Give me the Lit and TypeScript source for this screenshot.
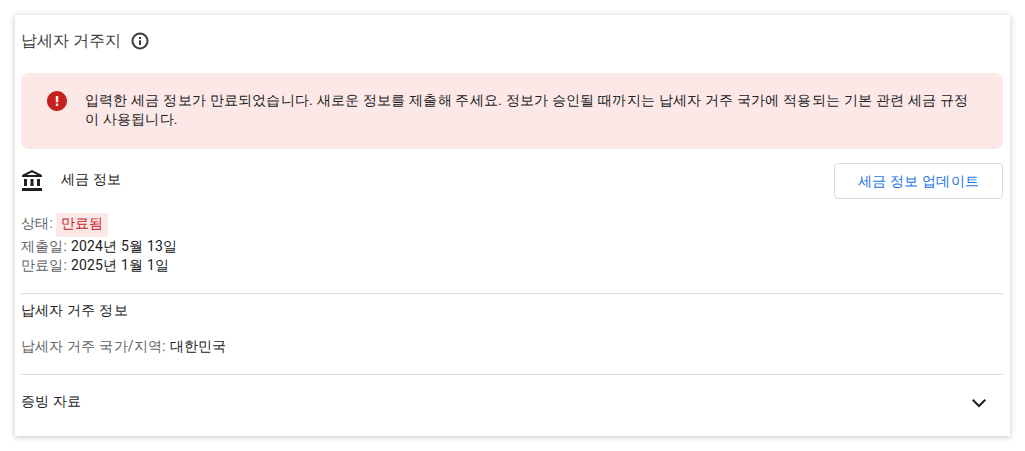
import { LitElement, html, css } from "lit";
import { customElement } from "lit/decorators.js";

@customElement("app-root")
export class AppRoot extends LitElement {
  static styles = css`
    :host { display: block; font-family: Roboto, sans-serif; font-size: 14px; line-height: 20px; letter-spacing: .2px; color: #202124; }
    .page { padding: 15px; }
    .card { background: #fff; box-shadow: 0 1px 6px rgba(60,64,67,.3); padding: 0 7px 0 6px; height: 421px; box-sizing: border-box; display: flex; flex-direction: column; }
    .title { display: flex; align-items: center; gap: 9px; height: 50px; box-sizing: border-box; padding-top: 2px; font-size: 16px; letter-spacing: 0; color: #3c4043; }
    .title svg { display: block; }
    .banner { margin-top: 8px; height: 76px; box-sizing: border-box; background: #fce8e6; border-radius: 8px; display: flex; align-items: flex-start; padding: 16px 24px; gap: 16px; line-height: 19px; }
    .banner svg { flex: none; }
    .banner .msg { padding-right: 10px; margin-top: 2px; }
    .tax { display: flex; justify-content: space-between; margin-top: 14px; }
    .taxhead { display: flex; align-items: flex-start; gap: 19px; }
    .taxhead span { margin-top: 6px; }
    .taxicon { margin: 7px 0 0 1px; }
    .btn { width: 169px; height: 36px; box-sizing: border-box; border: 1px solid #dadce0; border-radius: 4px; color: #1a73e8; display: flex; align-items: center; justify-content: center; }
    .info { margin-top: 14px; line-height: 19px; color: #5f6368; }
    .info b { font-weight: 400; color: #202124; }
    .chip { display: block; background: #fce8e6; color: #c5221f; border-radius: 3px; padding: 0 4px 4px 5px; line-height: 20px; margin-left: 3px; }
    .row1 { height: 24px; display: flex; align-items: flex-start; line-height: 20px; }
    hr { border: 0; border-top: 1px solid #dadce0; margin: 0; }
    .sec { margin-top: 18px; }
    .sectitle { margin-top: 6px; }
    .res { margin-top: 16px; color: #5f6368; }
    .res b { font-weight: 400; color: #202124; margin-left: .5px; }
    .hr2 { margin-top: 18px; }
    .foot { display: flex; justify-content: space-between; align-items: center; height: 53px; padding-right: 10px; }
    .foot span { padding-bottom: 2px; }
    .foot svg { display: block; margin-top: 3px; }
  `;
  render() {
    return html`<div class="page"><div class="card">
      <div class="title"><span>납세자 거주지</span>
        <svg width="20" height="20" viewBox="0 0 20 20"><circle cx="10" cy="10" r="7.5" fill="none" stroke="#3c4043" stroke-width="2"/><path fill="#3c4043" d="M9 6h2v2H9zm0 3.2h2V14H9z"/></svg>
      </div>
      <div class="banner">
        <svg width="24" height="24" viewBox="0 0 24 24"><path fill="#c5221f" d="M12 2C6.48 2 2 6.48 2 12s4.48 10 10 10 10-4.48 10-10S17.52 2 12 2zm1.2 11.2h-2.4V7h2.4zm0 3.8h-2.4v-2.4h2.4z"/></svg>
        <div class="msg">입력한 세금 정보가 만료되었습니다. 새로운 정보를 제출해 주세요. 정보가 승인될 때까지는 납세자 거주 국가에 적용되는 기본 관련 세금 규정이 사용됩니다.</div>
      </div>
      <div class="tax">
        <div class="taxhead">
          <svg class="taxicon" width="20" height="21" viewBox="2 1 20 21" fill="#202124"><path d="M4 10h3v7H4zm6.5 0h3v7h-3zM2 19h20v3H2zm15-9h3v7h-3zM12 1 2 6v2h20V6zm0 2.24L17.21 6H6.79z" fill-rule="evenodd"/></svg>
          <span>세금 정보</span>
        </div>
        <div class="btn">세금 정보 업데이트</div>
      </div>
      <div class="info">
        <div class="row1"><span>상태:</span><span class="chip">만료됨</span></div>
        <div>제출일: <b>2024년 5월 13일</b></div>
        <div>만료일: <b>2025년 1월 1일</b></div>
      </div>
      <hr class="sec" />
      <div class="sectitle">납세자 거주 정보</div>
      <div class="res">납세자 거주 국가/지역: <b>대한민국</b></div>
      <hr class="hr2" />
      <div class="foot"><span>증빙 자료</span>
        <svg width="28" height="28" viewBox="0 0 28 28" fill="none" stroke="#202124" stroke-width="2"><path d="M7.7 10.7 14 17l6.3-6.3"/></svg>
      </div>
    </div></div>`;
  }
}
